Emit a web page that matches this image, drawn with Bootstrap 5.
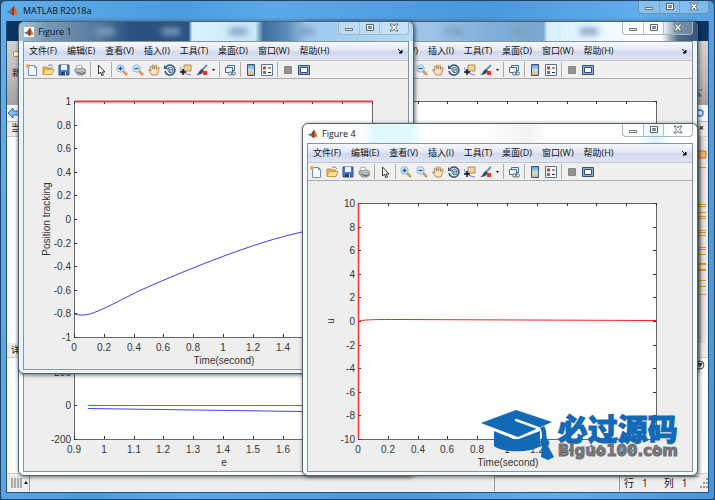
<!DOCTYPE html>
<html lang="zh-CN">
<head>
<meta charset="utf-8">
<meta name="viewport" content="width=device-width, initial-scale=1">
<title>MATLAB R2018a</title>
<link href="https://cdn.jsdelivr.net/npm/bootstrap@5.3.0/dist/css/bootstrap.min.css" rel="stylesheet">
<style>
body{font-family:"Open Sans","Noto Sans CJK SC",sans-serif;font-size:9px;line-height:12px;color:#111;background:#28567f}
button{border:0;background:none;padding:0;color:inherit;line-height:12px}
svg{display:block;flex:none}
.desktop{position:relative;min-height:100vh}
.main-win{min-height:100vh;padding:0 5px 6px;border:1px solid #1f4468;border-radius:6px 6px 3px 3px;background:linear-gradient(100deg,#62aeea 0,#4b9be0 22%,#5ba9e9 34%,#4a98dd 60%,#5fadea 80%,#4795da)}
.main-title{height:20px}
.client{background:#fff;border:1px solid #23527c;border-top:0}
.tabstrip{height:20px;background:#0b3560}
.ribbon{height:64px;background:linear-gradient(#d2d2d2,#b9b9b9 60%,#a2a2a2);padding:8px 5px}
.addr{height:17px;background:#f4f6f8;border-bottom:1px solid #bbb}
.pane-head{height:15px;background:#ececec;border-bottom:1px solid #ccc}
.editor{min-height:206px}
.marks{width:12px;background:linear-gradient(90deg,#bbb,#f1f1f1)}
.status{height:19px;background:#eee;border-top:1px solid #ccc;font-size:10px}
.grip{width:11px;height:10px;background:repeating-linear-gradient(90deg,#aaa 0 2px,#e8e8e8 2px 3px)}
.cell{height:15px;border-left:1px solid #999;border-top:1px solid #aaa}
.ctl-set{border:1px solid #6c93b5;border-top:0;border-radius:0 0 4px 4px;height:13px;background:rgba(255,255,255,.25)}
.ctl-set button{height:12px;width:20px;display:flex;align-items:center;justify-content:center}
.ctl-set button+button{border-left:1px solid #7fa2c0}
.ctl-set button:last-child{width:29px}
.fig{position:absolute;width:396px;padding:0 4px 3px;border:1px solid #56616c;border-radius:6px;box-shadow:1px 1px 4px rgba(0,0,0,.6);background:#fbfeff}
.fig .ctl-set{border-color:#a9b4bd}
.fig .ctl-set button+button{border-color:#b6c0c8}
.fig-title{height:19px;padding-left:1px}
.fig-body{border:1px solid #8c9299;background:#eee}
.f1{left:18px;top:21px;background:linear-gradient(90deg,#a9c4dc 0,#7798b8 7%,#55799f 20%,#2a527f 28%,#2a527f 43%,#d8f3ff 44%,#c9e8f8 60%,#3f6d9e 62%,#5b8bb9 68%,#9cc9ee 73%,#b3dcf8 100%) 0 0/100% 19px no-repeat,#e5f7fd}
.f2{left:302px;top:21px;background:linear-gradient(90deg,#a8d0ef 0,#9cc4e8 32%,#7faed8 48%,#7aa8d3 61%,#d6efff 62%,#f3faff 78%,#fff 91%,#53718f 95%,#345a80 99%) 0 0/100% 19px no-repeat,#e8f6fd}
.f3{left:18px;top:123px}
.f4{left:302px;top:123px;background:linear-gradient(90deg,#fff 0,#fff 15%,#dff8fd 18%,#e2f9fd 28%,#fff 30%,#fff 44%,#f3f3f3 58%,#fff 62%,#fff 85%,#dff3fa 89%,#fff 94%) 0 0/100% 19px no-repeat,#f2fbfe}
.blur-spot{width:18px;height:7px;background:#7fa0bf;filter:blur(3px)}
.menu-row{height:18px;padding:0 5px;gap:10px;background:linear-gradient(#f7f9fd,#e1e7f5 45%,#d1d9ee 55%,#dfe5f5)}
.menu-row button{white-space:nowrap}
.tools{height:19px;border-top:1px solid #c5c5c5;border-bottom:1px solid #aaa;background:#f0f0f0}
.tool-group{gap:4px;padding:0 4px;height:15px;border-right:1px solid #aaa}
.tool-group:first-child{padding-left:2px}
.tool-group:last-child{border:0}
.plot{width:100%;height:290px}
.plot text{font-family:"Liberation Sans",Arial,sans-serif;font-size:10px;fill:#333}
.brand{position:absolute;right:37px;bottom:39px;color:#126ab6}
.brand-cn{font:900 30px/32px "Noto Sans CJK SC",sans-serif;-webkit-text-stroke:1px #126ab6}
.brand-url{font:bold 15px/16px "DejaVu Sans",sans-serif;color:#727578;-webkit-text-stroke:1px #727578}
</style>
<script src="https://cdn.jsdelivr.net/npm/bootstrap@5.3.0/dist/js/bootstrap.bundle.min.js"></script>
</head>
<body>
<svg width="0" height="0" class="position-absolute" aria-hidden="true">
  <symbol id="logo" viewBox="0 0 12 12"><path d="M0 7l4-2 2 2-2 2z" fill="#397fae"/><path d="M4 5l3-4 1 1-2 5z" fill="#6d4c58"/><path d="M7 1c2 1 3 6 5 9-2-2-3-1-5 1L4 9c2-2 2-5 3-8z" fill="#e0661f"/><path d="M7 1c1 3 0 7 0 10L5 9c1-2 1-5 2-8z" fill="#8b2514"/></symbol>
  <symbol id="new" viewBox="0 0 12 12"><path d="M2.500 1.500h6l2 2v8h-8z" fill="#f7fbff" stroke="#6b90bd"/><path d="M8.500 1.500v2h2" fill="none" stroke="#6b90bd"/><circle cx="2" cy="2" r="2" fill="#f4a04b"/></symbol>
  <symbol id="open" viewBox="0 0 12 12"><path d="M1 10V3h4l1 1h4v6z" fill="#eeb24c" stroke="#c88f3c"/><path d="M1 10.500l2-5h9l-2 5z" fill="#ffe193" stroke="#d69a40"/><path d="M6 2c2-2 4-1 5 1" fill="none" stroke="#537db4"/></symbol>
  <symbol id="save" viewBox="0 0 12 12"><path d="M1 1h10v10H1z" fill="#4a76c4" stroke="#2f5096"/><path d="M3 1h6v5H3z" fill="#e9f3ff"/><path d="M3 8h6v3H3z" fill="#26406e"/><path d="M7 8h1v3H7z" fill="#fff"/></symbol>
  <symbol id="print" viewBox="0 0 12 12"><path d="M3 6l-1-4 5-1 2 5" fill="#fff" stroke="#999" stroke-width=".8"/><path d="M1 5l8-1 3 2v3l-3 2H4L1 8z" fill="#b9bdc3" stroke="#7d8288" stroke-width=".8"/><path d="M3 8l5 2 3-2" fill="none" stroke="#555"/></symbol>
  <symbol id="cursor" viewBox="0 0 12 12"><path d="M3.500 1v9l2-2 1.500 4 1.500-1-1.500-3h3z" fill="#fff" stroke="#222" stroke-width=".9"/></symbol>
  <symbol id="zin" viewBox="0 0 12 12"><path d="M7 7l4 4" stroke="#d79647" stroke-width="2.500"/><circle cx="4.500" cy="4.500" r="3.700" fill="#d2eaff" stroke="#8fb4d8"/><path d="M2.500 4.500h4m-2-2v4" stroke="#1c55ae" stroke-width="1.300"/></symbol>
  <symbol id="zout" viewBox="0 0 12 12"><path d="M7 7l4 4" stroke="#d79647" stroke-width="2.500"/><circle cx="4.500" cy="4.500" r="3.700" fill="#d2eaff" stroke="#8fb4d8"/><path d="M2.500 4.500h4" stroke="#1c55ae" stroke-width="1.300"/></symbol>
  <symbol id="hand" viewBox="0 0 12 12"><path d="M4 11L1 7c-1-2 1-2 2 0L2 3c0-1 1-1 2 0l1 2-.5-3.500c0-1 1-1 1.500 0L6.500 5 7 2c.5-1 1.500-1 1.500 0v3.500l1.500-2c1-1 1.500 0 1 1.500L9 11z" fill="#ffe5bd" stroke="#9c7545" stroke-width=".8"/></symbol>
  <symbol id="rotate" viewBox="0 0 12 12"><path d="M2 3a5 5 0 1 1-1 4" fill="none" stroke="#345778" stroke-width="1.500"/><path d="M0 1v4h4z" fill="#345778"/><path d="M4 4l3-1 2 2v3L6 9 4 7zM4 4l2 2 3-1M6 6v3" fill="#cfe0ef" stroke="#345778" stroke-width=".8"/></symbol>
  <symbol id="datatip" viewBox="0 0 12 12"><path d="M0 3c1 5 5 7 11 8" fill="none" stroke="#6a80dc"/><path d="M4 1h7v6H4z" fill="#f0d29e" stroke="#b08c5c"/><path d="M0 8h6M3 5v6" stroke="#111" stroke-width="1.500"/></symbol>
  <symbol id="brush" viewBox="0 0 12 12"><path d="M11 1L6 6" stroke="#7590aa" stroke-width="2"/><path d="M6 5l2 2c-2 3-4 4-8 4 3-1 3-5 6-6z" fill="#394b65"/><path d="M7 7h4v4H7z" fill="#f13222"/></symbol>
  <symbol id="link" viewBox="0 0 12 12"><path d="M3.500 1.500h7v5h-7z" fill="#eaf3fc" stroke="#456a91"/><path d="M1.500 3.500h7v5h-7z" fill="#eaf3fc" stroke="#456a91"/><rect x="4.500" y="8" width="4" height="3" rx="1.500" fill="#eee" stroke="#58718a"/><rect x="7.500" y="8" width="4" height="3" rx="1.500" fill="none" stroke="#58718a"/></symbol>
  <linearGradient id="cb" x2="0" y2="1"><stop stop-color="#5d91d8"/><stop offset=".5" stop-color="#bfe3ed"/><stop offset="1" stop-color="#f6aa4b"/></linearGradient>
  <symbol id="colorbar" viewBox="0 0 12 12"><path d="M2.500 .5h7v11h-7z" fill="url(#cb)" stroke="#39577d"/></symbol>
  <symbol id="legend" viewBox="0 0 12 12"><path d="M.5.5h11v11H.5z" fill="#fff" stroke="#5a728e"/><path d="M2 2.500h3v3H2z" fill="#e73333"/><path d="M2 7h3v3H2z" fill="#5a72df"/><path d="M7 4h3M7 8.500h3" stroke="#222"/></symbol>
  <symbol id="square" viewBox="0 0 12 12"><path d="M2.500 2.500h7v7h-7z" fill="#929292" stroke="#888"/></symbol>
  <symbol id="dock" viewBox="0 0 12 12"><path d="M.5 1.500h11v9H.5z" fill="#8eb1d1" stroke="#2e5277"/><path d="M2.500 3.500h7v5h-7z" fill="#fff" stroke="#2e5277"/></symbol>
  <symbol id="caret" viewBox="0 0 3 12"><path d="M0 5h3L1.500 7z" fill="#111"/></symbol>
  <symbol id="wmin" viewBox="0 0 10 10"><path d="M1.500 5.500h7v2h-7z" fill="#fff" stroke="#59636d" stroke-width=".9"/></symbol>
  <symbol id="wmax" viewBox="0 0 10 10"><path d="M1.500 1.500h7v6h-7z" fill="#fff" stroke="#59636d"/><path d="M3.700 3.500h2.600v2H3.700z" fill="#bcc8d4" stroke="#59636d"/></symbol>
  <symbol id="wclose" viewBox="0 0 10 10"><path d="M1 1h2.500L5 3l1.500-2H9L6.500 4.500 9 8H6.500L5 6 3.500 8H1l2.500-3.500z" fill="#fff" stroke="#59636d" stroke-width=".9"/></symbol>
</svg>

<div class="desktop">
  <main class="main-win d-flex flex-column">
    <header class="main-title d-flex align-items-center">
      <svg width="13" height="12"><use href="#logo"/></svg>
      <span class="flex-grow-1 text-nowrap ps-1">MATLAB R2018a</span>
      <div class="ctl-set d-flex align-self-start">
        <button aria-label="最小化"><svg width="10" height="10"><use href="#wmin"/></svg></button>
        <button aria-label="最大化"><svg width="10" height="10"><use href="#wmax"/></svg></button>
        <button aria-label="关闭"><svg width="10" height="10"><use href="#wclose"/></svg></button>
      </div>
    </header>
    <div class="client d-flex flex-column flex-grow-1">
      <div class="tabstrip"></div>
      <div class="ribbon d-flex justify-content-between">
        <div><svg width="9" height="10"><path d="M1.500 2.500h7v5h-7z" fill="#fff1cb" stroke="#c9883c"/></svg><div class="mt-2">新</div></div>
        <svg width="10" height="8" class="align-self-end"><path d="M0 1h10M1 7l4-4 4 4z" fill="#777" stroke="#777"/></svg>
      </div>
      <div class="addr d-flex justify-content-between align-items-center">
        <svg width="12" height="12"><path d="M1 6l5-5v3h6v4H6v3z" fill="#8cbcf0" stroke="#3367a8"/></svg>
        <svg width="12" height="12"><circle cx="4" cy="6" r="3" fill="none" stroke="#3987d3" stroke-width="1.500"/></svg>
      </div>
      <div class="pane-head d-flex justify-content-between ps-1"><span>当前</span><b class="pe-1">×</b></div>
      <div class="editor d-flex justify-content-between">
        <div></div>
        <svg class="marks" height="206" id="marks"></svg>
      </div>
      <div class="pane-head d-flex justify-content-between align-items-center ps-1 flex-shrink-0"><span>详</span></div>
      <div class="flex-grow-1 d-flex justify-content-end">
        <svg width="12" height="14"><circle cx="4" cy="7" r="4" fill="#eee" stroke="#555"/><path d="M1 5h6L4 9z" fill="#444"/></svg>
      </div>
      <footer class="status d-flex align-items-center">
        <div class="grip ms-1"></div><svg width="7" height="12"><path d="M2 7h4L4 4z" fill="#111"/></svg>
        <div class="cell flex-grow-1 border-top-0"></div>
        <div class="cell" style="width:125px"></div>
        <div class="cell d-flex gap-2 ps-1" style="width:80px"><span>行</span><span>1</span><span class="ps-2">列</span><span>1</span></div>
        <svg width="9" height="12"><path d="M7 2h2M4 6h2m1 0h2M1 10h2m1 0h2m1 0h2" stroke="#999" stroke-width="2"/></svg>
      </footer>
    </div>
  </main>
  <div id="figures"></div>
  <div class="brand d-flex align-items-center gap-1" aria-label="必过源码">
    <svg width="73" height="52" viewBox="0 0 73 52"><path d="M13 22l22 9 24-9v15c-8 7-38 7-46 0z" fill="#126ab6"/><path d="M0 14L35 1l36 12-34 15z" fill="#126ab6" stroke="#f4f6f8" stroke-width="2" paint-order="stroke"/><path d="M35 11l22 8c3 1 4 3 4 6v6" fill="none" stroke="#f4f6f8" stroke-width="2.500" stroke-linecap="round"/><path d="M59 19l4-2c3 4 2 9 3 13 3 2 3 5 1 7l6 11-6 3-7-3 1-11c-3-2-2-6 0-8 0-4 0-7-2-10z" fill="#126ab6"/></svg>
    <div><div class="brand-cn">必过源码</div><div class="brand-url">Biguo100.com</div></div>
  </div>
</div>

<script>
const icon = n => `<button aria-label="${n}"><svg width="${n === 'caret' ? 3 : 12}" height="12"><use href="#${n}"/></svg></button>`;
const groups = [['new','open','save','print'],['cursor'],['zin','zout','hand','rotate','datatip','brush','caret'],['link'],['colorbar','legend'],['square','dock']];
const menus = ['文件(F)','编辑(E)','查看(V)','插入(I)','工具(T)','桌面(D)','窗口(W)','帮助(H)'];
const L = 50, T = 22, W = 298, H = 236;

// Axes box with inward ticks, tick labels and axis names
function plot(f) {
  let s = `<rect x="${L}.500" y="${T}.500" width="${W}" height="${H}" fill="#fff" stroke="#666"/>`;
  f.x.forEach((t, i) => {
    const x = Math.round(L + W * i / (f.x.length - 1));
    s += `<path d="M${x}.500 ${T}v3M${x}.500 ${T + H}v-3" stroke="#333"/><text x="${x}" y="${T + H + 14}" text-anchor="middle">${t}</text>`;
  });
  f.y.forEach((t, i) => {
    const y = Math.round(T + H * i / (f.y.length - 1));
    s += `<path d="M${L} ${y}.500h3M${L + W} ${y}.500h-3" stroke="#333"/><text x="${L - 3}" y="${y + 4}" text-anchor="end">${t}</text>`;
  });
  s += `<text x="200" y="${T + H + 27}" text-anchor="middle">${f.xn}</text>`;
  s += `<text transform="translate(26 140) rotate(-90)" text-anchor="middle">${f.yn}</text>`;
  return s + f.lines;
}
const range = (a, b, n) => Array.from({length: n + 1}, (_, i) => +(a + (b - a) * i / n).toFixed(2));
const time = range(0, 2, 10);
const figs = [
  {n: 3, x: range(.9, 1.9, 10), y: range(1200, -200, 7), xn: 'e', yn: '', lines: '<rect x="64" y="224" width="284" height="1" fill="#ff3b33"/><path d="M64 227.500L278 230.500 348 232" stroke="#4040ff" fill="none"/>'},
  {n: 2, x: time, y: range(1, -1, 10), xn: 'Time(second)', yn: '', lines: ''},
  {n: 1, x: time, y: range(1, -1, 10), xn: 'Time(second)', yn: 'Position tracking', lines: '<path d="M51 22.500h298" stroke="#e0434b" stroke-width="2"/><path d="M51 235C56 236.500 62 236.500 69 234C87 227 102 218 117 211C144 199 173 187 200 177C227 167 251 159 278 153C302 146 324 140 348 135" stroke="#3b3bf5" fill="none"/>'},
  {n: 4, x: time, y: range(10, -10, 10), xn: 'Time(second)', yn: 'u', lines: '<path d="M50.500 22v236" stroke="#ff2f2f" stroke-width="1.500"/><path d="M51 140C57 138.500 70 138.500 90 138.500L348 139.500" stroke="#f02424" fill="none"/>'}
];
document.getElementById('figures').innerHTML = figs.map(f => `
<section class="fig f${f.n}">
  <header class="fig-title d-flex align-items-center">
    <svg width="10" height="10" class="bg-white"><use href="#logo"/></svg><span class="ps-1 text-nowrap">Figure ${f.n}</span>
    <div class="flex-grow-1 d-flex justify-content-around">${f.n < 3 ? '<i class="blur-spot"></i><i class="blur-spot"></i><i class="blur-spot"></i><i class="blur-spot"></i>' : ''}</div>
    <div class="ctl-set d-flex align-self-start">${['wmin','wmax','wclose'].map(n => `<button aria-label="${n}"><svg width="10" height="10"><use href="#${n}"/></svg></button>`).join('')}</div>
  </header>
  <div class="fig-body">
    <nav class="menu-row d-flex align-items-center">${menus.map(m => `<button>${m}</button>`).join('')}<svg class="ms-auto" width="6" height="6"><path d="M1 1l3 3M5 2v3H2z" stroke="#111" fill="#111"/></svg></nav>
    <div class="tools d-flex align-items-center">${groups.map(g => `<div class="tool-group d-flex align-items-center">${g.map(icon).join('')}</div>`).join('')}</div>
    <svg class="plot" role="img" aria-label="Figure ${f.n}">${plot(f)}</svg>
  </div>
</section>`).join('');
const ys = [18,30,67,69,75,79,81,93,95,98,110,112,117,126,127,132,133,143,149,157];
document.getElementById('marks').innerHTML = '<path d="M2 14h8v7H2z" fill="#f4b066" stroke="#bd7a35"/>' + ys.slice(1).map(y => `<rect y="${y}" x="1" width="9" height="1" fill="#ee8a12"/>`).join('');
</script>
</body>
</html>
